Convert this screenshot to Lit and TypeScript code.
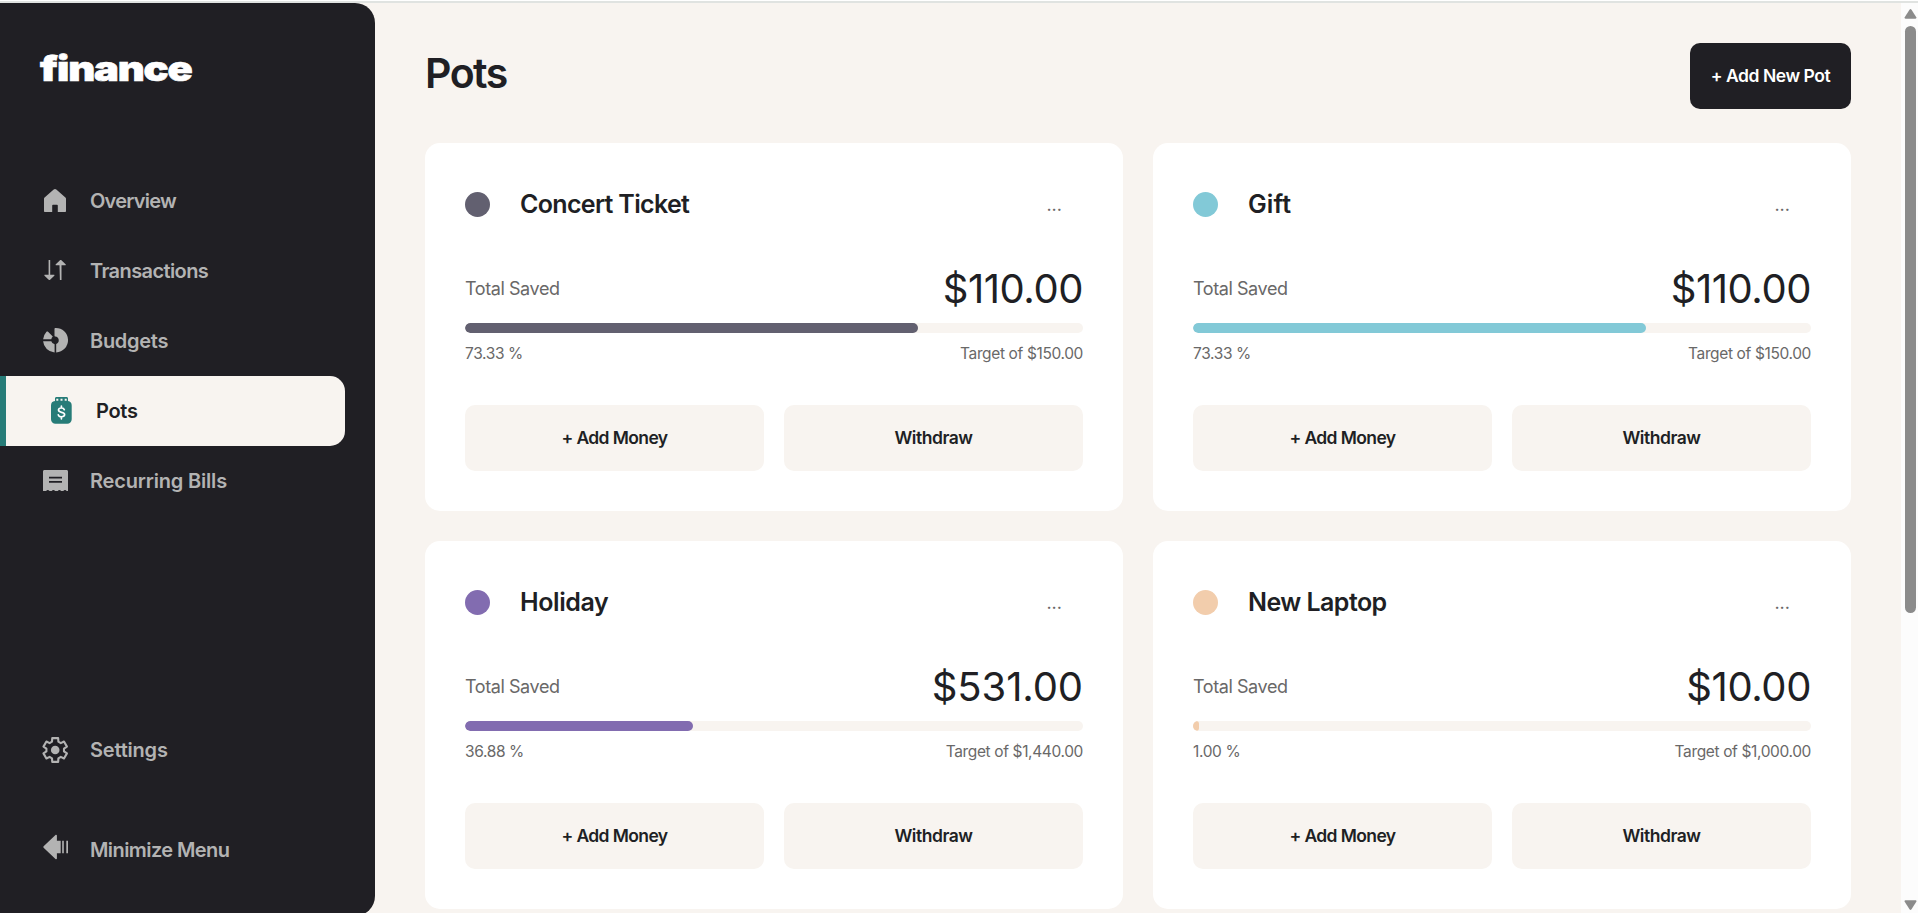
import { LitElement, html, svg, css } from "lit";
import { customElement, property } from "lit/decorators.js";
import { styleMap } from "lit/directives/style-map.js";
import { classMap } from "lit/directives/class-map.js";

interface Pot {
  name: string;
  saved: number;
  target: number;
  color: string;
  tracking: number;
  sumTracking: number;
}

interface NavItem {
  id: string;
  label: string;
  tracking: number;
}

const POTS: Pot[] = [
  { name: "Concert Ticket", saved: 110, target: 150, color: "#626070", tracking: -0.68, sumTracking: -0.45 },
  { name: "Gift", saved: 110, target: 150, color: "#82c9d7", tracking: 0.1, sumTracking: -0.45 },
  { name: "Holiday", saved: 531, target: 1440, color: "#826cb0", tracking: -0.4, sumTracking: -0.1 },
  { name: "New Laptop", saved: 10, target: 1000, color: "#f2cdac", tracking: -0.55, sumTracking: -0.4 },
];

const NAV: NavItem[] = [
  { id: "overview", label: "Overview", tracking: -0.75 },
  { id: "transactions", label: "Transactions", tracking: -0.6 },
  { id: "budgets", label: "Budgets", tracking: -0.28 },
  { id: "pots", label: "Pots", tracking: -0.3 },
  { id: "bills", label: "Recurring Bills", tracking: -0.18 },
];

const money = (n: number) =>
  "$" + n.toLocaleString("en-US", { minimumFractionDigits: 2, maximumFractionDigits: 2 });

// Six-toothed cog outline centred on (cx, cy).
function cog(cx: number, cy: number, outer: number, root: number): string {
  const pts: string[] = [];
  for (let i = 0; i < 6; i++) {
    const mid = i * 60 - 90;
    for (const [a, r] of [[-21, root], [-14, outer], [14, outer], [21, root]]) {
      const t = ((mid + a) * Math.PI) / 180;
      pts.push(`${(cx + r * Math.cos(t)).toFixed(2)} ${(cy + r * Math.sin(t)).toFixed(2)}`);
    }
  }
  return `M${pts.join("L")}Z`;
}

const ICONS: Record<string, unknown> = {
  overview: svg`<path d="M15 3c.5 0 .9.2 1.3.5l9.1 7.9c.4.4.6.8.6 1.300V25c0 .6-.4 1-1 1h-7.200v-6.500a.8.8 0 0 0-.8-.8h-4a.8.8 0 0 0-.8.8V26H5c-.6 0-1-.4-1-1V12.700c0-.5.2-.9.6-1.300l9.100-7.900c.4-.3.8-.5 1.300-.5z"/>`,
  transactions: svg`<path d="M8.600 4h1.600v14.700h3.600c.7 0 .9.7.5 1.100l-4.200 4c-.4.4-1 .4-1.400 0l-4.200-4c-.4-.4-.2-1.100.5-1.100h3.600zM19.900 24h1.600V9.300h3.600c.7 0 .9-.7.5-1.100l-4.200-4c-.4-.4-1-.4-1.400 0l-4.200 4c-.4.4-.2 1.100.5 1.100h3.200z"/>`,
  budgets: svg`<path d="M14.500 3c0-.6.4-1 1-1a12.200 12.200 0 0 1 .7 24.400v-8.300a4 4 0 0 0-1-7.700c-.4-.1-.7-.5-.7-1zM3.100 15.200h8.200a4.200 4.200 0 0 0 3.300 3v8.200A12.200 12.200 0 0 1 3.100 15.200zM3.100 13.300A12.200 12.200 0 0 1 6.300 6c.6-.6 1.400-.6 2 0l4.500 4.600a4.200 4.200 0 0 0-1.500 2.700z"/>`,
  pots: svg`<path fill-rule="evenodd" d="M10.500 1h10c.9 0 1.500.6 1.500 1.500V5a4.500 4.500 0 0 1 3.700 4.500v13.700a4.500 4.500 0 0 1-4.500 4.500H9.500A4.500 4.500 0 0 1 5 23.200V9.500A4.500 4.500 0 0 1 9 5V2.500C9 1.600 9.600 1 10.500 1zM10.300 2.700v2h2v-2zM14.500 2.700v2h2v-2zM18.700 2.700v2h2v-2z"/>
    <path class="coin" d="M18.300 13.700c-.3-1.200-1.400-1.700-2.900-1.700-1.700 0-2.900.8-2.900 2.100 0 3.300 6.100 1.200 6.100 4.500 0 1.400-1.300 2.200-3.100 2.200-1.700 0-2.900-.6-3.200-1.900M15.400 10v2M15.400 20.800v2"/>`,
  bills: svg`<path fill-rule="evenodd" d="M4.500 4h22c.9 0 1.500.6 1.500 1.500V25h-1.300c-.9-1.300-2.500-1.300-3.400 0h-2.200c-.9-1.300-2.500-1.300-3.400 0h-2.600c-.9-1.300-2.500-1.300-3.400 0H9.500C8.600 23.700 7 23.700 6.100 25H3V5.500C3 4.600 3.600 4 4.500 4zM9 10.700v1.800h13v-1.800zM9 15v1.800h13V15z"/>`,
  settings: svg`<path class="line" d="${cog(15.2, 15, 12.2, 8.9)}"/><circle cx="15.200" cy="15" r="4.300"/>`,
  minimize: svg`<path d="M3.600 14.300 15.500 3c.5-.6 1.400-.2 1.400.5v5.200h3.800v12.600h-3.800v5.200c0 .7-.9 1.100-1.400.5L3.600 15.700c-.4-.4-.4-1 0-1.400zM22.200 8.700h1.600v12.600h-1.600zM26.300 8.700H28v12.600h-1.700z"/>`,
};

@customElement("nav-link")
class NavLink extends LitElement {
  @property() icon = "";
  @property() label = "";
  @property({ type: Number }) tracking = 0;
  @property({ type: Boolean }) active = false;

  static styles = css`
    :host { display: block; }
    .item {
      box-sizing: border-box;
      height: 70px;
      width: 345px;
      padding-left: 40px;
      display: flex;
      align-items: center;
      gap: 20px;
      color: #b3b3b3;
      font-size: 20px;
      font-weight: 600;
      white-space: nowrap;
    }
    .active {
      background: #f8f4f0;
      border-left: 6px solid #277c78;
      border-radius: 0 15px 15px 0;
      color: #201f24;
    }
    svg { width: 30px; height: 30px; fill: currentColor; flex: none; }
    .active svg { color: #277c78; }
    .coin { fill: none; stroke: #fff; stroke-width: 1.7; stroke-linecap: round; }
    .line { fill: none; stroke: currentColor; stroke-width: 2.1; stroke-linejoin: round; }
    .raised svg { margin-bottom: 6px; }
  `;

  render() {
    return html`<div class=${classMap({ item: true, active: this.active, raised: this.icon === "minimize" })}>
      <svg viewBox="0 0 30 30">${ICONS[this.icon]}</svg>
      <span style=${styleMap({ letterSpacing: `${this.tracking}px` })}>${this.label}</span>
    </div>`;
  }
}

@customElement("pot-card")
class PotCard extends LitElement {
  @property({ attribute: false }) pot!: Pot;

  static styles = css`
    :host {
      display: block;
      box-sizing: border-box;
      height: 368px;
      padding: 40px;
      background: #fff;
      border-radius: 15px;
      color: #201f24;
    }
    .head { display: flex; align-items: center; height: 43px; }
    .dot { width: 25px; height: 25px; border-radius: 50%; margin-right: 30px; }
    .name { flex: 1; font-size: 25px; font-weight: 600; line-height: 30px; padding-bottom: 2px; }
    .more { font-size: 18px; color: #696868; margin-right: 21px; line-height: 22px; padding-top: 1px; }
    .sum { display: flex; align-items: center; justify-content: space-between; height: 48px; margin-top: 39px; color: #696868; }
    .caption { font-size: 18px; letter-spacing: -0.42px; padding-bottom: 1px; }
    .amount { font-size: 40px; color: #201f24; padding-bottom: 2px; }
    .track { height: 10px; margin-top: 10px; border-radius: 5px; background: #f8f4f0; overflow: hidden; }
    .fill { height: 10px; border-radius: 5px; }
    .meta { display: flex; justify-content: space-between; margin-top: 10px; font-size: 15.500px; line-height: 22px; letter-spacing: -0.37px; color: #696868; }
    .actions { display: grid; grid-template-columns: 1fr 1fr; gap: 20px; margin-top: 40px; }
    .btn {
      height: 66px;
      border: 0;
      padding: 0 0 2px;
      border-radius: 10px;
      background: #f8f4f0;
      color: #201f24;
      font: 600 17.500px Inter, "Liberation Sans", sans-serif;
      letter-spacing: -0.45px;
    }
    .add { letter-spacing: -0.6px; }
  `;

  render() {
    const { name, saved, target, color, tracking, sumTracking } = this.pot;
    const pct = (saved / target) * 100;
    return html`
      <div class="head">
        <span class="dot" style=${styleMap({ background: color })}></span>
        <span class="name" style=${styleMap({ letterSpacing: `${tracking}px` })}>${name}</span>
        <span class="more">...</span>
      </div>
      <div class="sum">
        <span class="caption">Total Saved</span>
        <span class="amount" style=${styleMap({ letterSpacing: `${sumTracking}px` })}>${money(saved)}</span>
      </div>
      <div class="track"><div class="fill" style=${styleMap({ width: `${pct}%`, background: color })}></div></div>
      <div class="meta"><span>${pct.toFixed(2)} %</span><span>Target of ${money(target)}</span></div>
      <div class="actions">
        <button class="btn add">+ Add Money</button>
        <button class="btn">Withdraw</button>
      </div>`;
  }
}

@customElement("app-root")
class AppRoot extends LitElement {
  static styles = css`
    :host {
      display: flex;
      flex-direction: column;
      height: 100vh;
      overflow: hidden;
      background: #f8f4f0;
      color: #201f24;
      font-family: Inter, "Liberation Sans", sans-serif;
    }
    .edge { flex: none; height: 2px; border-top: 1px solid #fff; background: #e0e3e1; }
    .page { flex: 1; min-height: 0; display: flex; }
    .sidebar {
      flex: none;
      width: 375px;
      height: 913px;
      border-radius: 0 20px 20px 0;
      background: #201f24;
      display: flex;
      flex-direction: column;
    }
    .logo { height: 163px; box-sizing: border-box; padding: 43px 0 0 40px; }
    .logo span {
      display: inline-block;
      font-size: 35px;
      line-height: 44px;
      font-weight: 900;
      letter-spacing: -1px;
      color: #fff;
      -webkit-text-stroke: 0.7px #fff;
      transform: scaleX(1.19);
      transform-origin: left;
    }
    .lower { margin-top: 199px; display: grid; gap: 30px; }
    .main { flex: 1; padding: 40px 50px 0; }
    .header { display: flex; justify-content: space-between; align-items: flex-start; height: 100px; }
    h1 { margin: 6px 0 0; font-size: 41px; line-height: 48px; font-weight: 600; letter-spacing: -1.5px; }
    .new {
      width: 161px;
      height: 66px;
      padding: 0 0 1px;
      border: 0;
      border-radius: 10px;
      background: #201f24;
      color: #fff;
      font: 600 17.500px Inter, "Liberation Sans", sans-serif;
      letter-spacing: -0.45px;
    }
    .grid { display: grid; grid-template-columns: 1fr 1fr; gap: 30px; }
    .scroll {
      flex: none;
      width: 17px;
      box-sizing: border-box;
      background: #fcfcfc;
      display: flex;
      flex-direction: column;
      align-items: center;
      padding: 6px 0 3px 2px;
      fill: #8b8b8b;
    }
    .scroll svg { width: 13px; height: 10px; flex: none; }
    .thumb { width: 11px; height: 587px; margin: 7px 0 auto; border-radius: 6px; background: #8b8b8b; }
  `;

  render() {
    return html`
      <div class="edge"></div>
      <div class="page">
        <aside class="sidebar">
          <div class="logo"><span>finance</span></div>
          <nav>
            ${NAV.map((n) => html`<nav-link icon=${n.id} label=${n.label} .tracking=${n.tracking} ?active=${n.id === "pots"}></nav-link>`)}
          </nav>
          <div class="lower">
            <nav-link icon="settings" label="Settings" .tracking=${-0.2}></nav-link>
            <nav-link icon="minimize" label="Minimize Menu" .tracking=${-0.58}></nav-link>
          </div>
        </aside>
        <main class="main">
          <div class="header">
            <h1>Pots</h1>
            <button class="new">+ Add New Pot</button>
          </div>
          <div class="grid">${POTS.map((p) => html`<pot-card .pot=${p}></pot-card>`)}</div>
        </main>
        <div class="scroll">
          <svg viewBox="0 0 13 10"><path d="M5.500.8a1.200 1.200 0 0 1 2 0l4.800 7.400c.5.8 0 1.500-.8 1.500h-10c-.8 0-1.300-.7-.8-1.500z"/></svg>
          <div class="thumb"></div>
          <svg viewBox="0 0 13 10"><path d="M5.500 9.200a1.200 1.200 0 0 0 2 0l4.800-7.400c.5-.8 0-1.500-.8-1.500h-10C.7.3.2 1 .7 1.800z"/></svg>
        </div>
      </div>`;
  }
}
